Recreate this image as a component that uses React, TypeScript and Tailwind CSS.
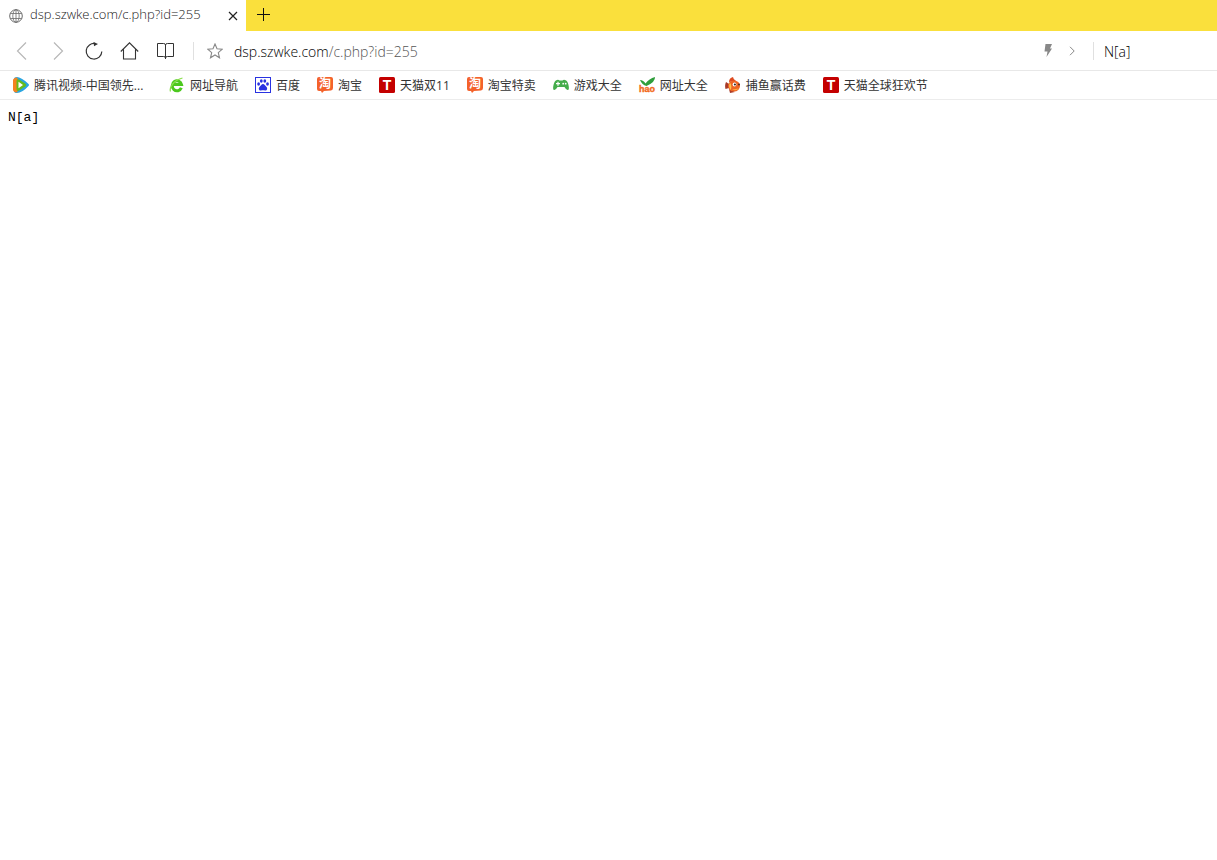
import React from 'react';
import { clsx } from 'clsx';

interface IconButtonProps {
  label: string;
  className?: string;
  children: React.ReactNode;
}

interface Bookmark {
  label: string;
  icon: React.ReactNode;
  wide?: boolean;
}

const IconButton: React.FC<IconButtonProps> = ({ label, className, children }) => (
  <button type="button" aria-label={label} className={clsx('flex shrink-0 items-center justify-center', className)}>
    {children}
  </button>
);

const GlobeIcon = () => (
  <svg width="14" height="14" viewBox="0 0 14 14" fill="none" stroke="#6a6a6a">
    <circle cx="7" cy="7" r="6.3" />
    <ellipse cx="7" cy="7" rx="3.2" ry="6.3" strokeWidth="0.8" />
    <path d="M7 .7v12.6M1.2 4.5h11.6M1.2 9.500h11.6" strokeWidth="0.8" />
  </svg>
);

const VideoIcon = () => (
  <svg width="16" height="16" viewBox="0 0 16 16">
    <path d="M1 2Q1 0 4 0q4 0 11 6.500 2 1.500 0 3Q9 16 4 16 1 16 1 14z" fill="#2aa5e0" />
    <path d="M0 3Q.5 1 4 0.500l1 2v11l-1 2Q.5 15 0 13z" fill="#f5821f" />
    <path d="M3.500 4Q3.500 1 6.500 2.800l6 4q1.500 1.200 0 2.400l-6 4Q3.500 15 3.500 12z" fill="#66bb1c" />
    <path d="M5.500 4.800v6.400L10 8z" fill="#ffffff" />
  </svg>
);

const NavIcon = () => (
  <svg width="16" height="16" viewBox="0 0 16 16" fill="none">
    <path d="M12.300 10.700A4.700 5 0 1 1 12.500 7.600H4" stroke="#4cc81e" strokeWidth="3" />
    <path d="M1.500 14.500C0 10.500 5 3 13.500 1" stroke="#8ade4c" strokeWidth="1.200" />
  </svg>
);

const PawIcon = () => (
  <svg width="16" height="16" viewBox="0 0 16 16">
    <rect x=".5" y=".5" width="15" height="15" fill="#ffffff" stroke="#2932e1" />
    <g fill="#2932e1">
      <ellipse cx="3.600" cy="7" rx="1.400" ry="1.800" />
      <ellipse cx="6.300" cy="4" rx="1.400" ry="1.800" />
      <ellipse cx="9.800" cy="4" rx="1.400" ry="1.800" />
      <ellipse cx="12.500" cy="7" rx="1.400" ry="1.800" />
      <path d="M8 7c1.500 0 2 1.600 3.300 2.700 1.600 1.500.9 4-1.300 3.800-1.300-.2-2.700-.2-4 0-2.200.2-2.900-2.300-1.300-3.800C6 8.600 6.500 7 8 7z" />
    </g>
  </svg>
);

const TaobaoIcon = () => (
  <svg width="16" height="16" viewBox="0 0 16 16" className="overflow-visible">
    <path d="M2 0h12q2 0 2 2v9q0 2-2 2.500L7 14l-2 2-1-2H2q-2 0-2-2V2Q0 0 2 0z" fill="#f4622b" />
    <text x="8" y="11" textAnchor="middle" fontSize="12" fontWeight="700" fill="#ffffff" fontFamily="Noto Sans CJK SC, sans-serif">
      淘
    </text>
  </svg>
);

const TmallIcon = () => (
  <svg width="16" height="16" viewBox="0 0 16 16">
    <rect width="16" height="16" rx="1.500" fill="#c40000" />
    <text x="8" y="13" textAnchor="middle" fontSize="14" fontWeight="700" fill="#ffffff" fontFamily="Liberation Sans, sans-serif">
      T
    </text>
  </svg>
);

const GamepadIcon = () => (
  <svg width="16" height="16" viewBox="0 0 16 16">
    <path d="M4 3q1.500-.5 2.500.5h3Q10.500 2.500 12 3q2.500.5 3.500 5 1 4.500-.5 5-1.500.5-3.500-3h-7Q2.500 13.500 1 13-.5 12.500.5 8 1.500 3.500 4 3z" fill="#45ad4c" />
    <path d="M3 6.700h4M5 4.700v4" stroke="#ffffff" strokeWidth="1.200" />
    <circle cx="10.200" cy="6.700" r=".9" fill="#ffffff" />
    <circle cx="12.700" cy="6.700" r=".9" fill="#ffffff" />
  </svg>
);

const HaoIcon = () => (
  <svg width="16" height="16" viewBox="0 0 16 16" className="overflow-visible">
    <path d="M1 3q3.500 0 5.500 3.500Q10 1.500 16 0q.5 5-8.500 9Q3 8 1 3z" fill="#2f9e3c" />
    <text x="8" y="15" textAnchor="middle" fontSize="9" fontWeight="700" fill="#f26a1b" stroke="#f26a1b" strokeWidth="0.400" fontFamily="Liberation Sans, sans-serif">
      hao
    </text>
  </svg>
);

const FishIcon = () => (
  <svg width="16" height="16" viewBox="0 0 16 16">
    <path d="M4 5Q4 1 8 0q0 2 3 4z" fill="#dd4a20" />
    <path d="M4 7 1 5Q-.5 8 .5 12L4 11zM4 12l1 4 5-1z" fill="#a83a28" />
    <ellipse cx="9" cy="9" rx="6" ry="5.600" fill="#ed6524" />
    <path d="M5 5.500q-2 3.500.5 7.500 2-3.500-.5-7.500z" fill="#ffc04a" />
    <path d="M7 12.500q4 2 7-1-3 .5-7 1z" fill="#ffb03c" />
    <circle cx="9.500" cy="7.500" r="1.900" fill="#ffffff" />
    <circle cx="9.900" cy="7.500" r="1.100" fill="#333333" />
    <circle cx="14" cy="7.500" r="1" fill="#5a2a20" />
  </svg>
);

const BOOKMARKS: Bookmark[] = [
  { label: '腾讯视频-中国领先...', icon: <VideoIcon />, wide: true },
  { label: '网址导航', icon: <NavIcon /> },
  { label: '百度', icon: <PawIcon /> },
  { label: '淘宝', icon: <TaobaoIcon /> },
  { label: '天猫双11', icon: <TmallIcon /> },
  { label: '淘宝特卖', icon: <TaobaoIcon /> },
  { label: '游戏大全', icon: <GamepadIcon /> },
  { label: '网址大全', icon: <HaoIcon /> },
  { label: '捕鱼赢话费', icon: <FishIcon /> },
  { label: '天猫全球狂欢节', icon: <TmallIcon /> },
];

const TabBar = () => (
  <div className="flex h-[31px] bg-[#fae03c]">
    <div className="flex w-[246px] shrink-0 items-center bg-white pr-2 pl-[9px] text-[13px] text-[#222222]">
      <GlobeIcon />
      <span className="ml-[7px] flex-1 pb-0.5 font-light whitespace-nowrap">dsp.szwke.com/c.php?id=255</span>
      <IconButton label="Close tab" className="h-5 w-[10px]">
        <svg width="10" height="10" viewBox="0 0 10 10" stroke="#222222" strokeWidth="1.200">
          <path d="M1 1l8 8M9 1L1 9" />
        </svg>
      </IconButton>
    </div>
    <IconButton label="New tab" className="w-9 pb-0.5">
      <svg width="14" height="14" viewBox="0 0 14 14" stroke="#111111">
        <path d="M6.500 0v13M0 6.500h13" />
      </svg>
    </IconButton>
  </div>
);

const Toolbar = () => (
  <div className="flex h-10 items-center border-b border-[#e8e8e8] pl-1">
    <div className="flex">
      <IconButton label="Back" className="w-9">
        <svg width="18" height="18" viewBox="0 0 18 18" fill="none" stroke="#b8b8b8" strokeWidth="1.200">
          <path d="M13 .5L4.500 9l8.500 8.500" />
        </svg>
      </IconButton>
      <IconButton label="Forward" className="w-9">
        <svg width="18" height="18" viewBox="0 0 18 18" fill="none" stroke="#b8b8b8" strokeWidth="1.200">
          <path d="M5 .5L13.500 9 5 17.500" />
        </svg>
      </IconButton>
      <IconButton label="Reload" className="w-9">
        <svg width="18" height="18" viewBox="0 0 18 18" fill="none" stroke="#333333" strokeWidth="1.200">
          <path d="M10.500 1.600A7.800 7.800 0 1 0 16.800 9.500" />
          <path d="M8.500 0l4.500 1.900-4 2.400z" fill="#333333" stroke="none" />
        </svg>
      </IconButton>
      <IconButton label="Home" className="w-9">
        <svg width="20" height="18" viewBox="0 0 20 18" fill="none" stroke="#333333" strokeWidth="1.100">
          <path d="M.8 9.500L9.500 .8l8.700 8.700M3.500 7.500v9.500h12V7.500" />
        </svg>
      </IconButton>
      <IconButton label="Reading list" className="w-9">
        <svg width="18" height="18" viewBox="0 0 18 18" fill="none" stroke="#333333">
          <path d="M.5 1.500h6q2 0 2 1.500 0-1.500 2-1.500h6v13h-6q-2 0-2 1.500 0-1.500-2-1.500h-6zM8.500 3v14" />
        </svg>
      </IconButton>
    </div>
    <div className="ml-[9px] h-[18px] w-px bg-[#e0e0e0]" />
    <IconButton label="Bookmark this page" className="ml-3 w-[18px]">
      <svg width="16" height="16" viewBox="0 0 16 16" fill="none" stroke="#888888" strokeWidth="1.100">
        <path d="M8 1l2 4.800 5.300.4-4 3.400 1.200 5.200L8 12l-4.500 2.800 1.200-5.200-4-3.400L6 5.800z" />
      </svg>
    </IconButton>
    <div className="ml-[10px] flex-1 pt-0.5 text-sm font-light whitespace-nowrap text-black">
      dsp.szwke.com<span className="text-[#555555]">/c.php?id=255</span>
    </div>
    <IconButton label="Turbo mode" className="w-6">
      <svg width="8" height="14" viewBox="0 0 8 14" fill="#888888">
        <path d="M1.500 0H8L6 4.500h2L2.500 13l1-5.500H.5z" />
      </svg>
    </IconButton>
    <IconButton label="Go" className="w-6">
      <svg width="8" height="10" viewBox="0 0 8 10" fill="none" stroke="#888888">
        <path d="M2 .8L6.200 5 2 9.200" />
      </svg>
    </IconButton>
    <div className="ml-[9px] h-[18px] w-px bg-[#e0e0e0]" />
    <div className="w-[123px] pt-0.5 pl-[10px] text-sm font-light text-black">N[a]</div>
  </div>
);

const BookmarkBar = () => (
  <nav className="flex h-[29px] items-center gap-[17px] overflow-hidden border-b border-[#ececec] pl-[13px] text-xs whitespace-nowrap text-[#333333]">
    {BOOKMARKS.map(({ label, icon, wide }) => (
      <a key={label} href="#" className="flex shrink-0 items-center gap-[5px]">
        {icon}
        <span className={clsx('pt-0.5', wide && 'w-[118px]')}>{label}</span>
      </a>
    ))}
  </nav>
);

export default function App() {
  return (
    <div className="min-h-screen bg-white font-['Open_Sans','Noto_Sans_CJK_SC',sans-serif]">
      <TabBar />
      <Toolbar />
      <BookmarkBar />
      <main className="p-2 font-['Liberation_Mono',monospace] text-[13px] leading-5 text-black">N[a]</main>
    </div>
  );
}
